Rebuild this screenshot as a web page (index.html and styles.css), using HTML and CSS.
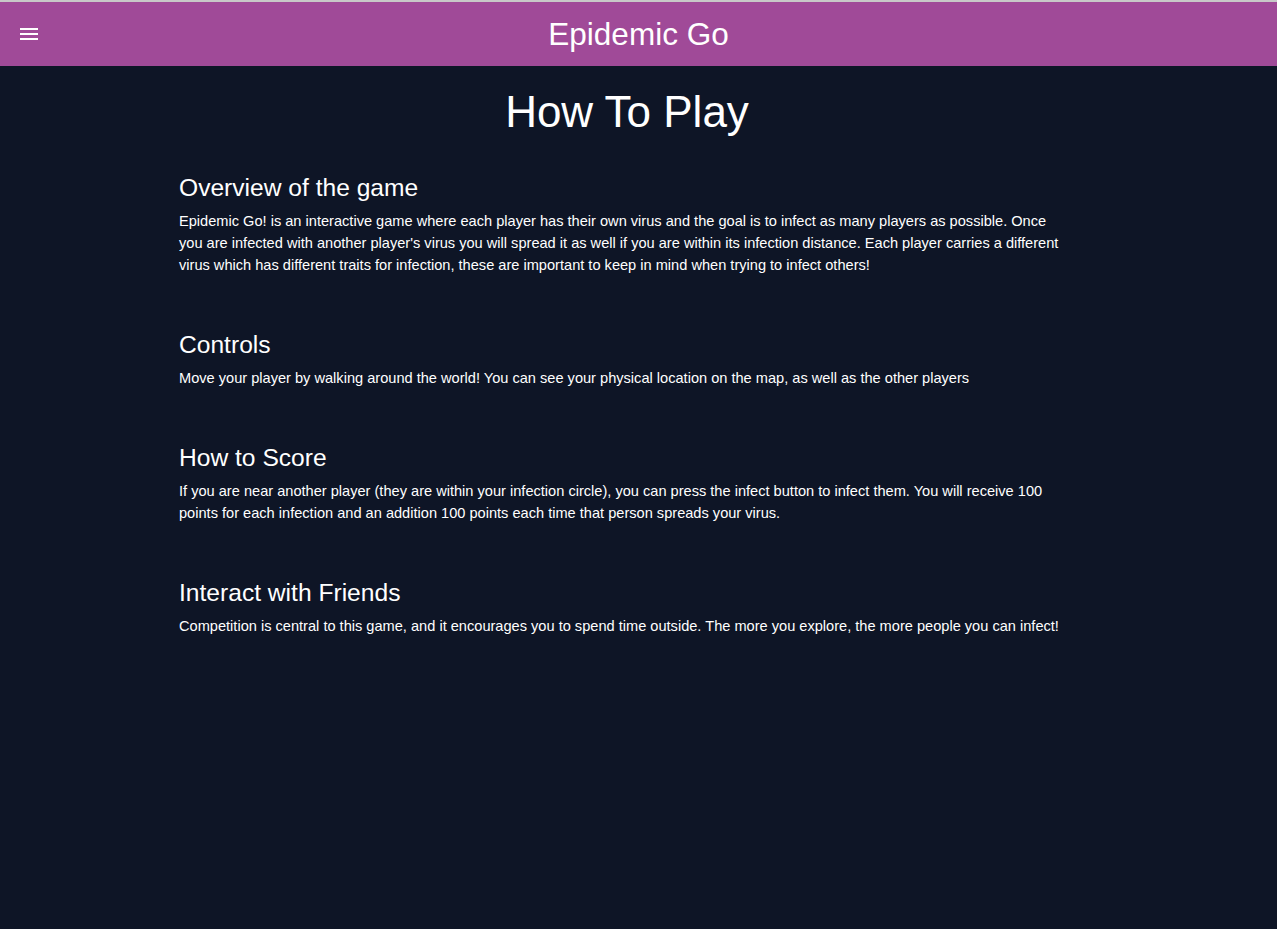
FILE: index.html
```html
<!DOCTYPE html>
<html>
<head>
<meta charset="utf-8">
<title>Epidemic Go</title>
<link rel="stylesheet" href="styles.css">
</head>
<body>
<header class="topbar">
  <div class="menu-btn">
    <svg width="18" height="12" viewBox="0 0 18 12"><rect x="0" y="0" width="18" height="2" fill="#fff"/><rect x="0" y="5" width="18" height="2" fill="#fff"/><rect x="0" y="10" width="18" height="2" fill="#fff"/></svg>
  </div>
  <div class="app-title">Epidemic Go</div>
  <div></div>
</header>
<main class="content">
  <h1 class="page-title">How To Play</h1>
  <section class="section">
    <h2 class="section-title">Overview of the game</h2>
    <p class="section-text">Epidemic Go! is an interactive game where each player has their own virus and the goal is to infect as many players as possible. Once you are infected with another player's virus you will spread it as well if you are within its infection distance. Each player carries a different virus which has different traits for infection, these are important to keep in mind when trying to infect others!</p>
  </section>
  <section class="section">
    <h2 class="section-title">Controls</h2>
    <p class="section-text">Move your player by walking around the world! You can see your physical location on the map, as well as the other players</p>
  </section>
  <section class="section">
    <h2 class="section-title">How to Score</h2>
    <p class="section-text">If you are near another player (they are within your infection circle), you can press the infect button to infect them. You will receive 100 points for each infection and an addition 100 points each time that person spreads your virus.</p>
  </section>
  <section class="section">
    <h2 class="section-title">Interact with Friends</h2>
    <p class="section-text">Competition is central to this game, and it encourages you to spend time outside. The more you explore, the more people you can infect!</p>
  </section>
</main>
</body>
</html>
```
FILE: styles.css
```css
html, body {
  margin: 0;
  padding: 0;
}
body {
  background: #0e1526;
  color: #ffffff;
  font-family: "Liberation Sans", Arial, sans-serif;
  min-height: 929px;
  box-sizing: border-box;
  border-top: 2px solid #c8c8c8;
}
.topbar {
  height: 64px;
  background: #a04a98;
  display: grid;
  grid-template-columns: 1fr auto 1fr;
  align-items: center;
}
.menu-btn {
  padding-left: 20px;
  display: flex;
  align-items: center;
}
.menu-btn svg {
  display: block;
}
.app-title {
  font-size: 31.5px;
  line-height: 36px;
}
.content {
  width: 896px;
  margin-left: 179px;
}
.page-title {
  font-size: 44px;
  font-weight: normal;
  text-align: center;
  margin: 21px 0 37px;
  line-height: 50px;
}
.section {
  margin-bottom: 55px;
}
.section-title {
  font-size: 24.6px;
  font-weight: normal;
  line-height: 28px;
  margin: 0 0 8px;
}
.section-text {
  font-size: 14.6px;
  line-height: 22px;
  margin: 0;
  padding-right: 5px;
}
```
